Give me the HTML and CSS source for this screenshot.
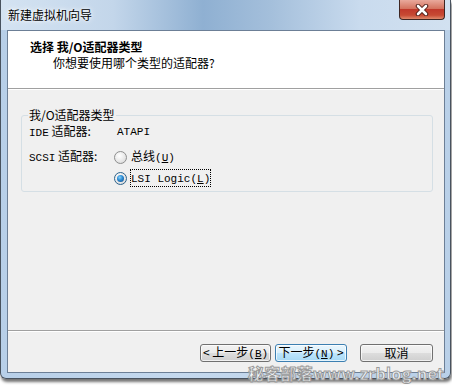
FILE: index.html
```html
<!DOCTYPE html>
<html lang="zh-CN">
  <head>
    <meta charset="UTF-8" />
    <title>新建虚拟机向导</title>
    <link rel="stylesheet" href="styles.css">
  </head>
  <body>
    <div class="window">
      <div class="titlebar">
        <span class="title">新建虚拟机向导</span>
        <div class="close-btn">
          <svg width="16" height="12" viewBox="0 0 16 12">
            <path d="M4 2 L12 10 M12 2 L4 10" stroke="#4a1a14" stroke-width="4.5" stroke-linecap="round" />
            <path d="M4 2 L12 10 M12 2 L4 10" stroke="#fff" stroke-width="2.6" stroke-linecap="round" />
          </svg>
        </div>
      </div>

      <div class="client">
        <div class="header">
          <div class="header-title">选择 我/O适配器类型</div>
          <div class="header-sub">你想要使用哪个类型的适配器?</div>
        </div>

        <div class="main">
          <fieldset class="group">
            <legend>我/O适配器类型</legend>
            <div class="row row-ide">
              <span class="label"><span class="lat">IDE</span> 适配器:</span>
              <span class="value lat">ATAPI</span>
            </div>
            <div class="row row-scsi">
              <span class="label"><span class="lat">SCSI</span> 适配器:</span>
              <span class="radio"></span>
              <span class="radio-text">总线<span class="lat">(<u>U</u>)</span></span>
            </div>
            <div class="row row-lsi">
              <span class="label"></span>
              <span class="radio checked"></span>
              <span class="radio-text focus"><span class="lat">LSI Logic(<u>L</u>)</span></span>
            </div>
          </fieldset>
        </div>

        <div class="footer">
          <button class="btn">&lt; 上一步<span class="lat">(<u>B</u>)</span></button>
          <button class="btn btn-default">下一步<span class="lat">(<u>N</u>)</span> &gt;</button>
          <button class="btn btn-cancel">取消</button>
        </div>
      </div>

      <div class="watermark">秘客部落www.zrblog.net</div>
    </div>
  </body>
</html>
```

FILE: styles.css
```css
html,
body {
  margin: 0;
  width: 452px;
  height: 386px;
  overflow: hidden;
  background: #fff;
  font-family: "Noto Sans CJK SC", "Liberation Sans", sans-serif;
  font-size: 12px;
  color: #000;
}

.window {
  position: relative;
  width: 449px;
  height: 378px;
  border: 1px solid #48525e;
  border-top: none;
  border-radius: 0 0 6px 6px;
  background: linear-gradient(to right, #b7cfe8 0%, #c5d9ee 40%, #b9d0e8 100%);
  box-shadow: 1px 3px 3px rgba(0, 0, 0, 0.55);
  display: flex;
  flex-direction: column;
}

.titlebar {
  height: 30px;
  display: flex;
  align-items: center;
  padding-left: 7px;
  background: linear-gradient(
    to right,
    #d4e3f2 0%,
    #c3d6ea 25%,
    #8fb0d2 45%,
    #a4bfdb 60%,
    #c9dbee 80%,
    #d2e1f0 100%
  );
}

.title {
  line-height: 16px;
  text-shadow: 0 0 6px #fff, 0 0 3px #fff;
}

.close-btn {
  margin-left: auto;
  margin-right: 5px;
  align-self: flex-start;
  width: 44px;
  height: 19px;
  border: 1px solid #3e2622;
  border-top: none;
  border-radius: 0 0 4px 4px;
  background: linear-gradient(#e9a99c 0%, #d4735f 45%, #c0392b 50%, #c74a33 80%, #e08a6c 100%);
  display: flex;
  align-items: center;
  justify-content: center;
}

.client {
  margin: 0 5px 0 6px;
  height: 341px;
  border: 1px solid #6c7f96;
  background: #f0f0f0;
  display: flex;
  flex-direction: column;
}

.header {
  height: 58px;
  background: #fff;
  border-bottom: 1px solid #a0a0a0;
  padding-left: 22px;
  box-sizing: border-box;
  padding-top: 8px;
}

.header-title {
  font-weight: bold;
  line-height: 16px;
}

.header-sub {
  line-height: 16px;
  margin-left: 23px;
}

.main {
  flex: 1;
  border-top: 1px solid #fff;
}

.lat {
  font-family: "Liberation Mono", monospace;
  font-size: 11px;
}

.group {
  margin: 18px 11px 0 13px;
  padding: 0 0 5px 7px;
  border: 1px solid #d5dfe5;
  border-radius: 3px;
}

.group legend {
  padding: 0 1px;
  margin-left: -1px;
  line-height: 14px;
}

.row {
  display: flex;
  align-items: center;
  height: 16px;
  line-height: 16px;
}

.row-ide {
  margin-top: 2px;
}

.row-scsi {
  margin-top: 9px;
}

.row-lsi {
  margin-top: 5px;
}

.label {
  width: 85px;
  flex-shrink: 0;
}

.value {
  padding-left: 3px;
}

.radio {
  width: 11px;
  height: 11px;
  border: 1px solid #8e8f8f;
  border-radius: 50%;
  background: radial-gradient(circle at 40% 35%, #fff 0%, #e6e6e6 60%, #cfcfcf 100%);
  box-sizing: content-box;
  position: relative;
}

.radio.checked {
  border-color: #2c628b;
}

.radio.checked::after {
  content: "";
  position: absolute;
  left: 2px;
  top: 2px;
  width: 7px;
  height: 7px;
  border-radius: 50%;
  background: radial-gradient(circle at 40% 35%, #8ad3f9 0%, #2a8ad4 45%, #13437a 100%);
}

.radio-text {
  margin-left: 3px;
  padding: 0 1px;
}

.radio-text.focus {
  outline: 1px dotted #000;
  outline-offset: -1px;
}

.footer {
  height: 42px;
  border-top: 1px solid #a0a0a0;
  box-shadow: inset 0 1px 0 #fff;
  box-sizing: border-box;
  display: flex;
  justify-content: flex-end;
  align-items: flex-start;
  padding: 13px 11px 0 0;
}

.btn {
  width: 71px;
  height: 18px;
  padding: 0;
  margin: 0;
  font-family: inherit;
  font-size: 12px;
  line-height: 14px;
  color: #000;
  border: 1px solid #707070;
  border-radius: 3px;
  background: linear-gradient(#f2f2f2 0%, #ebebeb 50%, #dddddd 50%, #cfcfcf 100%);
  box-shadow: inset 0 0 0 1px rgba(255, 255, 255, 0.7);
}

.btn + .btn {
  margin-left: 4px;
}

.btn-default {
  width: 72px;
  border-color: #3c7fb1;
  background: linear-gradient(#eaf6fd 0%, #d9f0fc 50%, #bee6fd 50%, #a7d9f5 100%);
}

.btn.btn-cancel {
  width: 73px;
  margin-left: 13px;
}

.watermark {
  position: absolute;
  right: 6px;
  bottom: -3px;
  font-size: 16px;
  line-height: 16px;
  font-weight: bold;
  font-family: "Noto Sans CJK SC", "DejaVu Sans", sans-serif;
  letter-spacing: 0.3px;
  color: rgba(255, 255, 255, 0.85);
  -webkit-text-stroke: 1px #9a9a9a;
}
```
